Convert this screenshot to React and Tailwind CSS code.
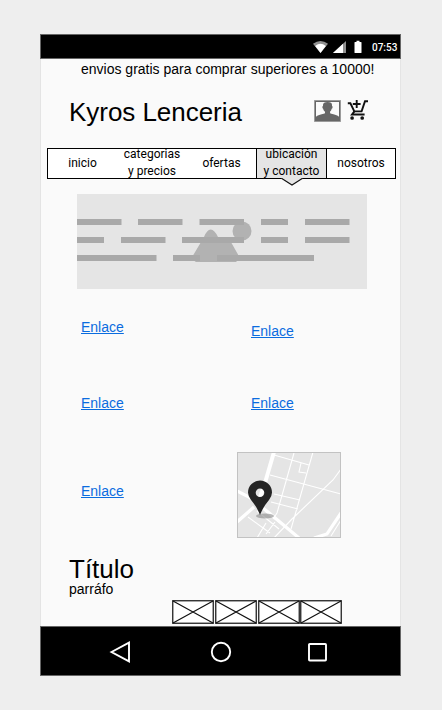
import React from 'react';

const tabs = [
  { lines: ['inicio'], cls: 'w-[69px]' },
  { lines: ['categorias', 'y precios'], cls: 'w-[70px]' },
  { lines: ['ofertas'], cls: 'w-[69px]' },
  { lines: ['ubicación', 'y contacto'], cls: 'w-[71px] border-x border-black bg-[#e5e5e5]', active: true },
  { lines: ['nosotros'], cls: 'w-[68px]' },
];

function StatusBar() {
  return (
    <header className="flex h-[25px] items-center justify-end border border-[#666] bg-black pr-[2px] text-white">
      <svg className="h-[14px] w-[51px]" viewBox="0 0 51 14">
        <path d="M0 3.8Q7.5-1.7 15 3.8L7.5 13Z" fill="#909090" />
        <path d="M2.2 6Q7.5 1.7 12.8 6L7.5 13Z" fill="#fff" />
        <path d="M20 13 33 1V13Z" fill="#909090" />
        <path d="M20 13 30 3.8V13Z" fill="#fff" />
        <path d="M42 2H43.5V.7h3V2h1.500q.5 0 .5.6v9.800q0 .6-.6.6h-5.800q-.6 0-.6-.6V2.600q0-.6.5-.6Z" fill="#fff" />
      </svg>
      <span className="ml-2 mt-[2px] w-[26px] whitespace-nowrap font-['Roboto',sans-serif] text-[10px] font-medium leading-none">07:53</span>
    </header>
  );
}

function ProfileIcon() {
  return (
    <svg className="h-[22px] w-[27px]" viewBox="0 0 27 22">
      <rect width="27" height="22" fill="#a9a9a9" />
      <rect x=".8" y=".8" width="25.4" height="20.4" fill="#666" />
      <rect x="2" y="2" width="23" height="18" fill="#fafafa" />
      <path d="M2 20v-3.2q2-1.7 8.7-3.2.5-.7.3-1.8Q9.500 10.600 9.100 8.800 8.200 8.300 8.400 6.800q.1-.5.6-.7V5Q9 2 13.600 2T18 5v1.100q.6.2.6.8 0 1.500-.9 1.900-.4 1.800-1.700 3 0 1.100.4 1.800Q23 15.100 25 16.800V20Z" fill="#666" />
    </svg>
  );
}

function CartIcon() {
  return (
    <svg className="h-[22px] w-[22px]" viewBox="0 0 22 22" fill="none" stroke="#111" strokeWidth="1.900">
      <path d="M.8 5.300H3.400L7.300 13.400H14.600L18 3.200H21" />
      <path d="M7.400 13.400 5 16.500H17.600" />
      <path d="M9.700 2V10M5.800 6H13.600" />
      <circle cx="5.100" cy="20" r="1.850" fill="#111" stroke="none" />
      <circle cx="15.200" cy="20" r="1.850" fill="#111" stroke="none" />
    </svg>
  );
}

function Tabs() {
  return (
    <nav className="ml-[6px] mt-[22px] flex h-[31px] w-[349px] border border-black bg-white font-['Roboto',sans-serif] text-[12px] leading-[17px] text-black">
      {tabs.map((t) => (
        <div key={t.lines[0]} className={`relative flex flex-col items-center justify-center text-center ${t.cls}`}>
          <div className={t.lines.length > 1 ? '-mt-[2px]' : ''}>
            {t.lines.map((l) => (
              <span key={l} className="block whitespace-nowrap">{l}</span>
            ))}
          </div>
          {t.active && (
            <svg className="absolute left-[24px] top-[28px] h-[9px] w-[22px]" viewBox="0 0 22 9">
              <path d="M0 0 .8 1.500 11 8 21.200 1.500 22 0Z" fill="#e5e5e5" />
              <path d="M.8 1.500 11 8 21.200 1.500" fill="none" stroke="#111" strokeWidth="1.100" />
            </svg>
          )}
        </div>
      ))}
    </nav>
  );
}

function Banner() {
  const bars = [
    [25, [[0, 44.500], [61, 44.500], [122.500, 44.500], [184, 27], [228, 44.500]]],
    [43, [[0, 27], [44, 44.500], [105, 62], [184, 27], [228, 44.500]]],
    [61, [[0, 79.500], [96, 27], [140, 97]]],
  ];
  return (
    <svg className="ml-[36px] mt-[15px] block h-[95px] w-[290px] bg-[#e5e5e5]" viewBox="0 0 290 95">
      <circle cx="165" cy="37" r="9.500" fill="#b2b2b2" />
      <path d="M119 68Q114.500 66 116 61.500L127 43Q130 35.500 133.700 35.500T141 43L145 49 149 45Q152 44 154.500 49L161 60.500Q163 66 159 68Z" fill="#b2b2b2" />
      {bars.map(([y, list]) =>
        list.map(([x, w]) => <rect key={`${x}-${y}`} x={x} y={y} width={w} height="6" fill="#a9a9a9" />)
      )}
    </svg>
  );
}

function Enlace() {
  return (
    <a href="#" className="text-[14px] leading-[16px] text-[#0a6cdf] underline decoration-1 underline-offset-[1px]">Enlace</a>
  );
}

function MapCard() {
  return (
    <svg className="block h-[86px] w-[104px]" viewBox="0 0 104 86">
      <rect x=".5" y=".5" width="103" height="85" fill="#e5e5e5" />
      <g fill="none" stroke="#fff">
        <path d="M37 0 28 31 20 54" strokeWidth="4" />
        <path d="M0 39 12 45 31 60 62 86M0 70 17 55M77 86 90 82 104 61" strokeWidth="3.200" />
        <path d="M37 3 72 13M33 23 104 42M37 42 63 48M34 50 61 57M57 1 40 61 36 67M76 0 54 77M64 11 62 20 69 21M104 17 96 28 55 67 37 86M11 65 33 81M20 59 42 77M28 59 47 74M29 71 20 86M38 70 29 82M94 84 104 68" strokeWidth="1.100" />
      </g>
      <ellipse cx="28" cy="64" rx="9" ry="2.500" fill="#888" opacity=".6" />
      <path fillRule="evenodd" d="M23 63Q20 55 14 48 11 44 11 40.500A12 12 0 0 1 35 40.500Q35 44 32 48 26 55 23 63ZM23 36.500a4.300 4.300 0 1 0 0 8.600 4.300 4.300 0 0 0 0-8.600Z" fill="#252525" />
      <rect x=".5" y=".5" width="103" height="85" fill="none" stroke="#c2c2c2" />
    </svg>
  );
}

function Placeholder() {
  return (
    <svg className="h-[24px] w-[42px]" viewBox="0 0 42 24">
      <rect x=".75" y=".75" width="40.500" height="22.500" fill="#fff" stroke="#222" strokeWidth="1.300" />
      <path d="M1 1 41 23M41 1 1 23" stroke="#111" strokeWidth="1.200" />
    </svg>
  );
}

export default function App() {
  return (
    <div className="flex h-[710px] w-[442px] flex-col items-center overflow-hidden bg-[#eee] pt-[34px] font-['Liberation_Sans',Arial,sans-serif] text-black">
      <div className="mr-[1px] flex h-[642px] w-[361px] flex-col">
        <StatusBar />
        <main className="h-[567px] border-x border-[#e4e4e4] bg-[#fafafa]">
          <p className="ml-[40px] mt-[2px] whitespace-nowrap text-[14px] leading-[16px]">envios gratis para comprar superiores a 10000!</p>
          <div className="ml-[28px] mt-[19px] flex h-[30px] items-center">
            <h1 className="mt-[2px] w-[245px] whitespace-nowrap text-[26px] leading-[30px] tracking-[-0.04px]">Kyros Lenceria</h1>
            <ProfileIcon />
            <div className="mb-[4px] ml-[6px]"><CartIcon /></div>
          </div>
          <Tabs />
          <Banner />
          <section className="ml-[40px] flex h-[163px] w-[300px]">
            <div className="flex w-[156px] flex-col">
              <div className="mt-[30px] h-[76px] shrink-0 leading-[16px]"><Enlace /></div>
              <div className="leading-[16px]"><Enlace /></div>
            </div>
            <div className="ml-[14px] flex flex-col">
              <div className="mt-[34px] h-[72px] shrink-0 leading-[16px]"><Enlace /></div>
              <div className="leading-[16px]"><Enlace /></div>
            </div>
          </section>
          <section className="ml-[40px] flex h-[86px]">
            <div className="mt-[31px] w-[156px] leading-[16px]"><Enlace /></div>
            <MapCard />
          </section>
          <section className="ml-[28px] mt-[18px]">
            <h2 className="text-[26px] leading-[26px]">Título</h2>
            <p className="-mt-px text-[14px] leading-[16px]">parráfo</p>
          </section>
          <div className="ml-[131px] mt-[3px] flex gap-[0.8px]">
            <Placeholder />
            <Placeholder />
            <Placeholder />
            <Placeholder />
          </div>
        </main>
        <footer className="flex h-[50px] items-center border border-[#666] bg-black">
          <svg className="ml-[68px] mt-px h-[24px] w-[220px]" viewBox="0 0 220 24" fill="none" stroke="#fff" strokeWidth="1.900">
            <path d="M2.500 12 20 2.700V21.300Z" />
            <circle cx="112" cy="12" r="9.200" />
            <rect x="200" y="4" width="17" height="16.500" rx=".8" />
          </svg>
        </footer>
      </div>
    </div>
  );
}
